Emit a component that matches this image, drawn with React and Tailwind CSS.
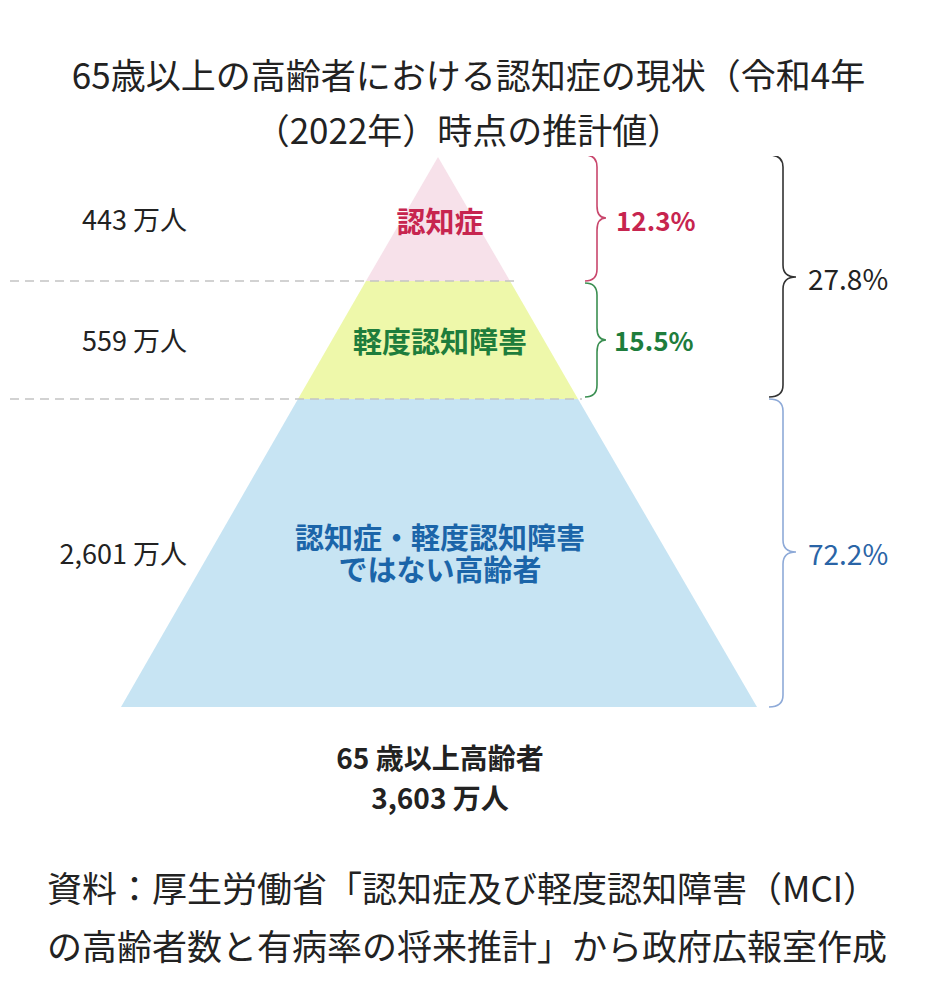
import React from 'react';

const jp = "font-['Noto_Sans_CJK_JP','Noto_Sans',sans-serif]";

// braces drawn in page coordinates (viewBox starts at the chart top)
const Brace = ({ x0, x1, tip, top, bottom, mid, color }) => {
  const r = Math.min(12, (bottom - top) / 8);
  const d = `M${x0},${top} Q${x1},${top} ${x1},${top + r} L${x1},${mid - r} Q${x1},${mid} ${tip},${mid} Q${x1},${mid} ${x1},${mid + r} L${x1},${bottom - r} Q${x1},${bottom} ${x0},${bottom}`;
  return <path d={d} fill="none" stroke={color} strokeWidth="1.6" />;
};

const Pyramid = () => (
  <svg className="absolute inset-0" width="937" height="555" viewBox="0 156 937 555">
    <polygon points="438,157 366,281 510,281" fill="#f7e1ea" />
    <polygon points="366,281 510,281 578,399 298,399" fill="#eef8aa" />
    <polygon points="298,399 578,399 757,707 121,707" fill="#c7e4f3" />
    <line x1="10" y1="281" x2="516" y2="281" stroke="#c4c4c4" strokeWidth="1.5" strokeDasharray="9 6" />
    <line x1="10" y1="399" x2="582" y2="399" stroke="#c4c4c4" strokeWidth="1.5" strokeDasharray="9 6" />
    <Brace x0={585} x1={597} tip={606} top={155} bottom={281} mid={218} color="#c9476d" />
    <Brace x0={585} x1={597} tip={606} top={283} bottom={397} mid={340} color="#3b8f52" />
    <Brace x0={769} x1={783} tip={796} top={155} bottom={397} mid={277} color="#333333" />
    <Brace x0={769} x1={783} tip={796} top={399} bottom={707} mid={552} color="#8eaad8" />
  </svg>
);

export default function App() {
  return (
    <div className={`w-full bg-white text-[#222] ${jp}`}>
      {/* Title */}
      <div className="pt-[46px] text-center text-[35px] leading-[55px]">
        <div>65歳以上の高齢者における認知症の現状（令和4年</div>
        <div>（2022年）時点の推計値）</div>
      </div>

      {/* Chart: pyramid drawing behind, labels laid out on a grid of its bands */}
      <div className="relative h-[555px] pt-px">
        <Pyramid />

        <div className="relative grid grid-cols-[290px_300px_216px_1fr] grid-rows-[124px_118px_308px] items-center">
          <div className="col-start-1 row-start-1 pr-[103px] text-right text-[27px] leading-[32px]">443 万人</div>
          <div className="col-start-1 row-start-2 pr-[103px] text-right text-[27px] leading-[32px]">559 万人</div>
          <div className="col-start-1 row-start-3 pr-[103px] text-right text-[27px] leading-[32px]">2,601 万人</div>

          <div className="col-start-2 row-start-1 pt-px text-center text-[29px] font-bold leading-[32px] text-[#c7254f]">認知症</div>
          <div className="col-start-2 row-start-2 text-center text-[29px] font-bold leading-[32px] text-[#1e7d3c]">軽度認知障害</div>
          <div className="col-start-2 row-start-3 flex flex-col items-center pb-[2px] text-[29px] font-bold leading-[32px] text-[#1b65a9]">
            <span>認知症・軽度認知障害</span>
            <span>ではない高齢者</span>
          </div>

          <div className="col-start-3 row-start-1 pl-[26px] pt-px text-[26px] font-bold leading-[32px] text-[#c7254f]">12.3%</div>
          <div className="col-start-3 row-start-2 pl-[24px] text-[26px] font-bold leading-[32px] text-[#1e7d3c]">15.5%</div>

          <div className="col-start-4 row-span-2 row-start-1 pl-[2px] text-[28px] leading-[32px] text-[#222]">27.8%</div>
          <div className="col-start-4 row-start-3 pl-[2px] text-[28px] leading-[32px] text-[#2a64a6]">72.2%</div>
        </div>
      </div>

      {/* Total */}
      <div className="mt-[26px] w-[880px] text-center text-[28px] font-bold leading-[40px]">
        <div>65 歳以上高齢者</div>
        <div>3,603 万人</div>
      </div>

      {/* Source */}
      <div className="mt-[41px] pb-[26px] pl-[47px] text-[35px] leading-[58px]">
        <div>資料：厚生労働省「認知症及び軽度認知障害（MCI）</div>
        <div>の高齢者数と有病率の将来推計」から政府広報室作成</div>
      </div>
    </div>
  );
}
